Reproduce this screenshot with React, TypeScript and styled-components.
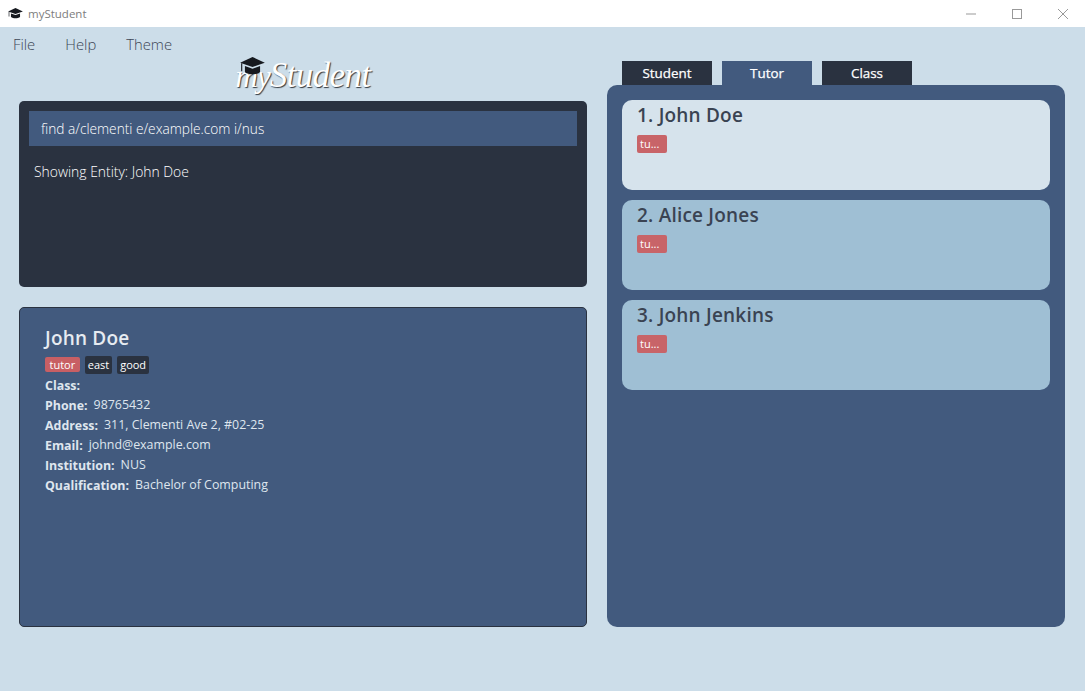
import styled, { createGlobalStyle } from 'styled-components';

const FONT = '"Open Sans", "Noto Sans", sans-serif';

const GlobalStyle = createGlobalStyle`
  html, body {
    margin: 0;
    height: 100%;
    background: #ccddE9;
    font-family: ${FONT};
  }
`;

function CapIcon({ size }: { size: number }) {
  return (
    <svg width={size} height={size * 0.72} viewBox="0 0 26 19">
      <path d="M13 0 L26 6 L13 10.5 L0 6 Z" fill="#16191f" />
      <path d="M5 9.5 L13 12.5 L21 9.5 V16 C17 19 9 19 5 16 Z" fill="#16191f" />
      <path d="M1.6 6.5 V15" stroke="#16191f" strokeWidth="1.2" />
    </svg>
  );
}

export default function App() {
  const tutors = ['John Doe', 'Alice Jones', 'John Jenkins'];
  const details = [
    ['Class:', ''],
    ['Phone:', '98765432'],
    ['Address:', '311, Clementi Ave 2, #02-25'],
    ['Email:', 'johnd@example.com'],
    ['Institution:', 'NUS'],
    ['Qualification:', 'Bachelor of Computing'],
  ];
  return (
    <Window>
      <GlobalStyle />
      <TitleBar>
        <AppName>
          <CapIcon size={15} />
          <span>myStudent</span>
        </AppName>
        <WindowButtons>
          <WinButton>
            <svg width="12" height="12" viewBox="0 0 12 12">
              <path d="M1 6 H11" stroke="#999" strokeWidth="1" />
            </svg>
          </WinButton>
          <WinButton>
            <svg width="12" height="12" viewBox="0 0 12 12">
              <rect x="1.5" y="1.5" width="9" height="9" fill="none" stroke="#999" strokeWidth="1" />
            </svg>
          </WinButton>
          <WinButton>
            <svg width="12" height="12" viewBox="0 0 12 12">
              <path d="M1 1 L11 11 M11 1 L1 11" stroke="#999" strokeWidth="1" />
            </svg>
          </WinButton>
        </WindowButtons>
      </TitleBar>
      <MenuBar>
        <MenuItem>File</MenuItem>
        <MenuItem>Help</MenuItem>
        <MenuItem>Theme</MenuItem>
      </MenuBar>
      <Main>
        <LeftColumn>
          <LogoRow>
            <LogoCap>
              <CapIcon size={25} />
            </LogoCap>
            <LogoText>
              <LogoMy>my</LogoMy>
              <LogoName>Student</LogoName>
            </LogoText>
          </LogoRow>
          <CommandPanel>
            <CommandBox>find a/clementi e/example.com i/nus</CommandBox>
            <ResultText>Showing Entity: John Doe</ResultText>
          </CommandPanel>
          <DetailPanel>
            <DetailName>John Doe</DetailName>
            <TagRow>
              <Tag $red>tutor</Tag>
              <Tag>east</Tag>
              <Tag>good</Tag>
            </TagRow>
            {details.map(([label, value]) => (
              <DetailRow key={label}>
                <DetailLabel>{label}</DetailLabel>
                <DetailValue>{value}</DetailValue>
              </DetailRow>
            ))}
          </DetailPanel>
        </LeftColumn>
        <RightColumn>
          <Tabs>
            <TabItem>Student</TabItem>
            <TabItem $active>Tutor</TabItem>
            <TabItem>Class</TabItem>
          </Tabs>
          <ListPanel>
            {tutors.map((name, i) => (
              <Card key={name} $selected={i === 0}>
                <CardName>
                  {i + 1}. {name}
                </CardName>
                <CardTag>tu...</CardTag>
              </Card>
            ))}
          </ListPanel>
        </RightColumn>
      </Main>
    </Window>
  );
}

const Window = styled.div`
  height: 691px;
  overflow: hidden;
  display: flex;
  flex-direction: column;
`;

const TitleBar = styled.div`
  height: 27px;
  background: #fff;
  display: flex;
  align-items: center;
  justify-content: space-between;
  padding-left: 8px;
  padding-right: 16px;
`;

const AppName = styled.div`
  display: flex;
  align-items: center;
  gap: 5px;
  font-size: 11.5px;
  color: #7d7d7d;
`;

const WindowButtons = styled.div`
  display: flex;
  gap: 34px;
`;

const WinButton = styled.div`
  display: flex;
  width: 12px;
  height: 12px;
`;

const MenuBar = styled.div`
  height: 30px;
  display: flex;
  align-items: center;
  gap: 30px;
  padding-left: 13px;
  padding-top: 4px;
  box-sizing: border-box;
`;

const MenuItem = styled.div`
  font-size: 14.8px;
  font-weight: 300;
  color: #3d4656;
`;

const Main = styled.div`
  display: flex;
  gap: 20px;
  padding: 0 20px 0 19px;
`;

const LeftColumn = styled.div`
  width: 568px;
  display: flex;
  flex-direction: column;
`;

const LogoRow = styled.div`
  position: relative;
  height: 44px;
  display: flex;
  justify-content: center;
  align-items: flex-start;
`;

const LogoCap = styled.div`
  position: absolute;
  left: 221px;
  top: 0;
`;

const LogoText = styled.div`
  display: flex;
  align-items: baseline;
  font-family: "Liberation Serif", serif;
  font-style: italic;
  line-height: 38px;
  color: #fff;
  text-shadow: 1px 1px 1px #33393f;
`;

const LogoMy = styled.span`
  font-size: 31px;
  letter-spacing: -1px;
`;

const LogoName = styled.span`
  font-size: 35px;
  letter-spacing: -0.6px;
`;

const CommandPanel = styled.div`
  height: 186px;
  box-sizing: border-box;
  background: #2a3240;
  border-radius: 5px;
  padding: 10px;
`;

const CommandBox = styled.div`
  height: 35px;
  background: #425a7e;
  padding-left: 12px;
  font-size: 13.7px;
  font-weight: 300;
  line-height: 35px;
  color: #fff;
`;

const ResultText = styled.div`
  margin-top: 16px;
  padding-left: 5px;
  font-size: 13.9px;
  font-weight: 300;
  line-height: 20px;
  color: #fff;
`;

const DetailPanel = styled.div`
  margin-top: 20px;
  height: 320px;
  box-sizing: border-box;
  background: #425a7e;
  border: 1px solid #2a3240;
  border-radius: 5px;
  padding: 16px 25px;
`;

const DetailName = styled.div`
  font-size: 19px;
  font-weight: 600;
  letter-spacing: 0.2px;
  line-height: 28px;
  color: #e6ebf1;
`;

const TagRow = styled.div`
  display: flex;
  gap: 5px;
  margin-top: 4px;
  margin-bottom: 1px;
`;

const Tag = styled.span<{ $red?: boolean }>`
  height: ${(props) => (props.$red ? 15 : 18)}px;
  margin-top: ${(props) => (props.$red ? 1 : 0)}px;
  padding: 0 ${(props) => (props.$red ? 4.5 : 3)}px;
  background: ${(props) => (props.$red ? '#c85f64' : '#2a3240')};
  border-radius: 2px;
  font-size: 11px;
  line-height: ${(props) => (props.$red ? 16 : 17)}px;
  color: #fff;
`;

const DetailRow = styled.div`
  display: flex;
  gap: 6px;
  align-items: center;
  height: 20px;
`;

const DetailLabel = styled.span`
  font-size: 12.4px;
  font-weight: 700;
  color: #dfe6ee;
`;

const DetailValue = styled.span`
  padding-bottom: 2px;
  font-size: 12.4px;
  color: #dfe6ee;
`;

const RightColumn = styled.div`
  width: 458px;
  display: flex;
  flex-direction: column;
  padding-top: 4px;
`;

const Tabs = styled.div`
  display: flex;
  gap: 10px;
  padding-left: 15px;
`;

const TabItem = styled.div<{ $active?: boolean }>`
  width: 90px;
  height: 24px;
  background: ${(props) => (props.$active ? '#425a7e' : '#2a3240')};
  font-size: 13.4px;
  line-height: 25px;
  text-align: center;
  color: #fff;
  -webkit-text-stroke: 0.25px #fff;
`;

const ListPanel = styled.div`
  height: 542px;
  box-sizing: border-box;
  background: #425a7e;
  border-radius: 10px;
  padding: 15px;
  display: flex;
  flex-direction: column;
  gap: 10px;
`;

const Card = styled.div<{ $selected?: boolean }>`
  height: 90px;
  box-sizing: border-box;
  padding: 2px 15px;
  border-radius: 10px;
  background: ${(props) => (props.$selected ? '#d6e3ec' : '#9fbfd4')};
`;

const CardName = styled.div`
  font-size: 19px;
  font-weight: 600;
  letter-spacing: 0.2px;
  line-height: 27px;
  color: #3a4352;
`;

const CardTag = styled.div`
  margin-top: 6px;
  width: 30px;
  height: 18px;
  box-sizing: border-box;
  padding-left: 3px;
  background: #c86468;
  border-radius: 2px;
  font-size: 11px;
  line-height: 17px;
  color: #fff;
`;
